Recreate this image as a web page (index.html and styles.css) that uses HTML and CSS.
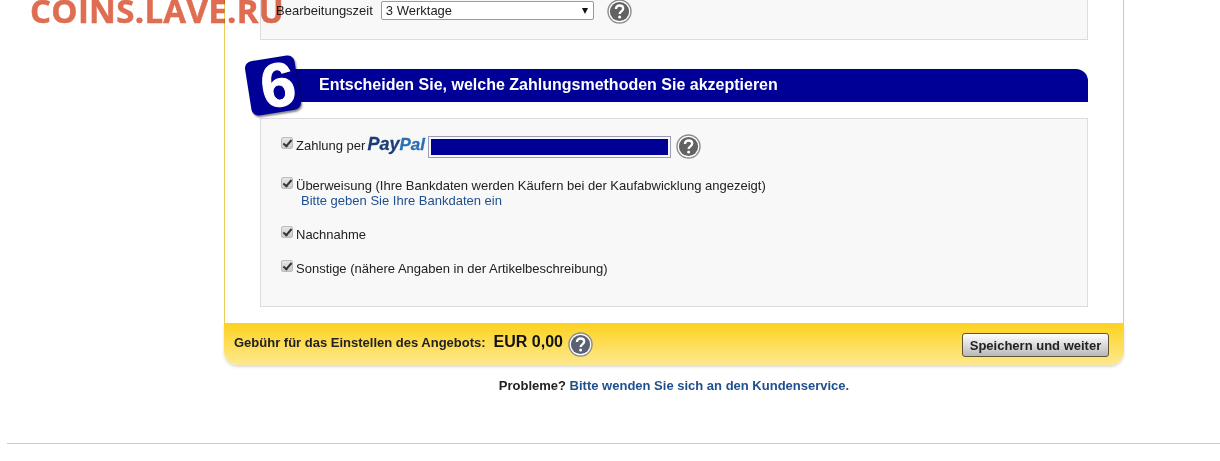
FILE: index.html
```html
<!DOCTYPE html>
<html lang="de">
  <head>
    <title>Angebot einstellen</title>
    <meta charset="UTF-8">
    <link rel="stylesheet" href="styles.css">
  </head>

  <body>
    <svg class="defs" width="0" height="0">
      <symbol id="help" viewBox="0 0 25 25">
        <circle cx="12.5" cy="12.5" r="11.5" fill="#fff" stroke="#8c8c8c" stroke-width="1.4"/>
        <circle cx="12.5" cy="12.5" r="9.6" fill="currentColor"/>
        <path d="M8.9 10c.2-2.300 1.700-3.500 3.700-3.500s3.600 1.200 3.600 3.100c0 2.800-3.600 2.700-3.600 5.400" fill="none" stroke="#fff" stroke-width="2.300"/>
        <circle cx="12.600" cy="18" r="1.500" fill="#fff"/>
      </symbol>
    </svg>

    <div class="watermark">COINS.LAVE.RU</div>

    <form class="card" action="" name="mainForm">
      <div class="panel panel-top">
        <span class="top-label">Bearbeitungszeit</span>
        <span class="select-wrap">
          <select class="select" name="days">
            <option>3 Werktage</option>
          </select>
        </span>
        <svg class="help help-top"><use href="#help"/></svg>
      </div>

      <div class="section-head">
        <div class="badge"><span class="badge-num">6</span></div>
        <h2 class="section-title">Entscheiden Sie, welche Zahlungsmethoden Sie akzeptieren</h2>
      </div>

      <div class="panel panel-pay">
        <div class="pay-row pay-row-paypal">
          <input type="checkbox" class="check" checked>
          <span>Zahlung per</span>
          <span class="paypal"><span class="paypal-pay">Pay</span><span class="paypal-pal">Pal</span></span>
          <input type="text" class="paypal-input" name="paypal">
          <svg class="help"><use href="#help"/></svg>
        </div>
        <div class="pay-row pay-row-bank">
          <input type="checkbox" class="check" checked>
          <div>
            <div>&Uuml;berweisung (Ihre Bankdaten werden K&auml;ufern bei der Kaufabwicklung angezeigt)</div>
            <a class="bank-link" href="#">Bitte geben Sie Ihre Bankdaten ein</a>
          </div>
        </div>
        <div class="pay-row pay-row-cod">
          <input type="checkbox" class="check" checked>
          <span>Nachnahme</span>
        </div>
        <div class="pay-row pay-row-other">
          <input type="checkbox" class="check" checked>
          <span>Sonstige (n&auml;here Angaben in der Artikelbeschreibung)</span>
        </div>
      </div>

      <div class="fee-bar">
        <span class="fee-label">Geb&uuml;hr f&uuml;r das Einstellen des Angebots:</span>
        <span class="fee-value">EUR 0,00</span>
        <svg class="help help-fee"><use href="#help"/></svg>
        <button type="button" class="save">Speichern und weiter</button>
      </div>
    </form>

    <p class="problem">Probleme? <a href="#">Bitte wenden Sie sich an den Kundenservice.</a></p>
    <hr class="rule">
  </body>
</html>
```

FILE: styles.css
```css
html, body {
	margin: 0;
	height: 461px;
	overflow: hidden;
}
body {
	font-family: "Liberation Sans", Arial, sans-serif;
	font-size: 13px;
	line-height: 15px;
	color: #222;
	background: #fff;
	position: relative;
}
a {
	text-decoration: none;
	color: #1f4f8f;
}
.defs {
	position: absolute;
}

.watermark {
	position: absolute;
	left: 30px;
	top: -9px;
	font-family: "Open Sans", sans-serif;
	font-size: 33px;
	line-height: 40px;
	font-weight: bold;
	letter-spacing: 0.3px;
	-webkit-text-stroke: 0.5px #df6d51;
	color: #df6d51;
	z-index: 2;
	mix-blend-mode: multiply;
}

.card {
	display: flow-root;
	width: 900px;
	margin-left: 224px;
	box-sizing: border-box;
	border-left: 1px solid #e9cf5a;
	border-right: 1px solid #e9cf5a;
}
.panel {
	margin-left: 35px;
	width: 828px;
	box-sizing: border-box;
	background: #f8f8f8;
	border: 1px solid #dcdcdc;
}
.panel-top {
	height: 40px;
	border-top: none;
	display: flex;
	align-items: flex-start;
	padding: 1px 0 0 15px;
}
.top-label {
	line-height: 19px;
}
.select-wrap {
	position: relative;
	margin-left: 8px;
	display: block;
}
.select-wrap:after {
	content: "";
	position: absolute;
	right: 6px;
	top: 7px;
	border-left: 3.500px solid transparent;
	border-right: 3.500px solid transparent;
	border-top: 6px solid #111;
}
.select {
	display: block;
	appearance: none;
	width: 213px;
	height: 19px;
	box-sizing: border-box;
	border: 1px solid #9a9a9a;
	border-radius: 2px;
	background: #fff;
	font: 13px "Liberation Sans", Arial, sans-serif;
	color: #222;
	padding: 0 4px;
}
.help {
	width: 25px;
	height: 25px;
	color: #626262;
	flex: none;
}
.help-top {
	margin: -2px 0 0 13px;
}

.section-head {
	position: relative;
	margin: 29px 0 0 65px;
	width: 798px;
	height: 33px;
	background: #000096;
	border-radius: 0 12px 0 0;
	box-sizing: border-box;
	padding-left: 29px;
}
.section-title {
	margin: 0;
	color: #fff;
	font-size: 16px;
	line-height: 32px;
	font-weight: bold;
}
.badge {
	position: absolute;
	left: -42px;
	top: -11px;
	width: 50px;
	height: 55px;
	background: #000096;
	border-radius: 7px;
	transform: rotate(-9deg);
	box-shadow: 1px 2px 2px rgba(0,0,0,.45);
	box-sizing: border-box;
	padding-left: 10px;
	text-align: center;
}
.badge-num {
	color: #fff;
	font-size: 62px;
	line-height: 56px;
	font-weight: bold;
	-webkit-text-stroke: 1px #fff;
}

.panel-pay {
	margin-top: 16px;
	height: 189px;
	padding: 16px 0 0 19px;
}
.pay-row {
	display: flex;
	align-items: flex-start;
}
.check {
	appearance: none;
	flex: none;
	position: relative;
	width: 10px;
	height: 10px;
	margin: -1px 3px 0 1px;
	border: 1px solid #bdbdbd;
	box-sizing: content-box;
	border-radius: 2px;
	background: linear-gradient(#e6e6e6, #c9c9c9);
}
.check:after {
	content: "";
	position: absolute;
	left: 3px;
	top: 0;
	width: 3px;
	height: 7px;
	border: solid #333;
	border-width: 0 2px 2px 0;
	transform: rotate(40deg);
}
.pay-row-paypal {
	height: 23px;
	align-items: center;
}
.pay-row-paypal .check {
	margin-top: -7px;
}
.pay-row-paypal span {
	margin-top: -2px;
}
.paypal {
	margin-left: 2px;
	font-size: 17px;
	font-weight: bold;
	font-style: italic;
	white-space: nowrap;
	margin-bottom: 2px;
	-webkit-text-stroke: 0.3px currentColor;
}
.paypal .paypal-pay {
	color: #1c3c78;
	font-size: 18px;
}
.paypal .paypal-pal {
	color: #2a6fb5;
}
.paypal-input {
	width: 243px;
	height: 22px;
	box-sizing: border-box;
	margin: 0 5px 0 3px;
	padding: 2px;
	border: 1px solid #9a9db5;
	background: #000096;
	background-clip: content-box;
}
.pay-row-bank {
	margin-top: 20px;
}
.bank-link {
	margin-left: 5px;
}
.pay-row-cod,
.pay-row-other {
	margin-top: 19px;
}

.fee-bar {
	margin: 16px -1px -15px;
	height: 42px;
	box-sizing: border-box;
	padding: 0 15px 0 10px;
	display: flex;
	align-items: center;
	background: linear-gradient(#fdd21f, #fde98f);
	border-radius: 0 0 14px 14px;
	box-shadow: 0 2px 3px rgba(0,0,0,.15);
}
.fee-label {
	font-weight: bold;
	color: #222;
	margin-bottom: 4px;
}
.fee-value {
	margin: 0 0 6px 8px;
	font-size: 16px;
	font-weight: bold;
	color: #111;
}
.help-fee {
	margin-left: 5px;
	color: #5b6072;
}
.save {
	margin: 2px 0 0 auto;
	width: 147px;
	height: 24px;
	padding: 0;
	border: 1px solid #5f5434;
	border-radius: 3px;
	background: linear-gradient(#fff, #b8b8b8);
	font: bold 13px "Liberation Sans", Arial, sans-serif;
	color: #222;
}

.problem {
	margin: 28px 0 0 224px;
	width: 900px;
	text-align: center;
	font-weight: bold;
	color: #222;
}
.rule {
	margin: 50px 0 0 7px;
	border: none;
	border-top: 1px solid #ccc;
}
```
